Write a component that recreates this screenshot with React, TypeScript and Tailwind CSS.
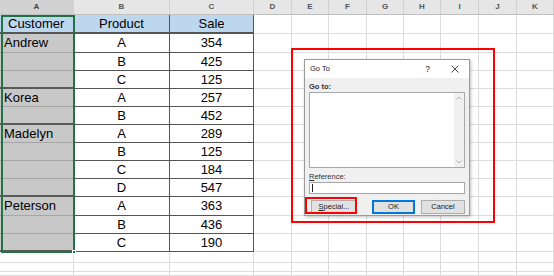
import React from 'react';

// Excel sheet with a "Go To" dialog on top of it

const colWidths = [74, 96, 84, 38, 37, 38, 37, 37, 38, 38, 37];
const colNames = ['A', 'B', 'C', 'D', 'E', 'F', 'G', 'H', 'I', 'J', 'K'];

type Row = { name?: string; product: string; sale: number; groupEnd?: boolean };

const rows: Row[] = [
  { name: 'Andrew', product: 'A', sale: 354 },
  { product: 'B', sale: 425 },
  { product: 'C', sale: 125, groupEnd: true },
  { name: 'Korea', product: 'A', sale: 257 },
  { product: 'B', sale: 452, groupEnd: true },
  { name: 'Madelyn', product: 'A', sale: 289 },
  { product: 'B', sale: 125 },
  { product: 'C', sale: 184 },
  { product: 'D', sale: 547, groupEnd: true },
  { name: 'Peterson', product: 'A', sale: 363 },
  { product: 'B', sale: 436 },
  { product: 'C', sale: 190, groupEnd: true },
];

const rowHeights = [19, 18, 18, 18, 18, 18, 18, 18, 18, 19, 18, 18];
const extraRows = [11, 9, 4];

const EmptyCells: React.FC<{ from: number }> = ({ from }) => (
  <>
    {colWidths.slice(from).map((w, i) => (
      <div
        key={i}
        className="shrink-0 border-r border-b border-[#dcdcdc]"
        style={{ width: w }}
      />
    ))}
  </>
);

const GoToDialog: React.FC = () => (
  <div className="absolute left-[304px] top-[59px] w-[166px] h-[157px] bg-[#f0f0f0] border border-[#9b9b9b] shadow-[1px_1px_3px_rgba(0,0,0,0.25)] flex flex-col font-['Liberation_Sans',sans-serif] text-[7.5px] text-[#1a1a1a]">
    <div className="h-[18px] bg-white flex items-center px-[5px] shrink-0">
      <span className="text-[7.5px]">Go To</span>
      <span className="ml-auto mr-[21px] text-[8.5px]">?</span>
      <svg width="8" height="8" viewBox="0 0 8 8" className="mr-[5px]">
        <path d="M0.5 0.5 L7.5 7.5 M7.5 0.5 L0.5 7.5" stroke="#333" strokeWidth="0.9" />
      </svg>
    </div>
    <div className="flex flex-col px-[4px] pt-[4px]">
      <span className="leading-[9px] font-bold text-[#333]">Go to:</span>
      <div className="mt-[1px] h-[76px] bg-white border border-[#a8a8a8] flex">
        <div className="flex-1" />
        <div className="w-[10px] bg-[#f0f0f0] flex flex-col items-center justify-between py-[3px]">
          <svg width="6" height="4" viewBox="0 0 6 4">
            <path d="M0.5 3.5 L3 1 L5.5 3.5" stroke="#a0a0a0" strokeWidth="0.8" fill="none" />
          </svg>
          <svg width="6" height="4" viewBox="0 0 6 4">
            <path d="M0.5 0.5 L3 3 L5.5 0.5" stroke="#a0a0a0" strokeWidth="0.8" fill="none" />
          </svg>
        </div>
      </div>
      <span className="mt-[4px] leading-[9px] text-[#333]">
        <span className="underline">R</span>eference:
      </span>
      <div className="mt-[1px] h-[12px] bg-white border border-[#a8a8a8] flex items-center pl-[2px]">
        <div className="w-px h-[8px] bg-[#222]" />
      </div>
      <div className="mt-[6px] flex items-center">
        <div className="w-[46px] h-[14px] ml-[2px] bg-[#e1e1e1] border border-[#adadad] flex items-center justify-center">
          <span>
            <span className="underline">S</span>pecial...
          </span>
        </div>
        <div className="ml-auto w-[43px] h-[14px] bg-[#e1e1e1] border-2 border-[#0078d7] flex items-center justify-center">
          OK
        </div>
        <div className="ml-[6px] w-[44px] h-[14px] bg-[#e1e1e1] border border-[#adadad] flex items-center justify-center">
          Cancel
        </div>
      </div>
    </div>
  </div>
);

export default function App() {
  return (
    <div className="relative w-[554px] h-[276px] overflow-hidden bg-white font-['Liberation_Sans',sans-serif] text-[13px] text-black">
      {/* column headers */}
      <div className="flex h-[15px] bg-[#e6e6e6] border-b border-[#bfbfbf]">
        {colNames.map((c, i) => (
          <div
            key={c}
            className={`shrink-0 flex items-center justify-center text-[8px] font-bold border-r border-[#d0d0d0] ${
              i === 0 ? 'bg-[#d2d2d2] text-[#444]' : 'text-[#555]'
            }`}
            style={{ width: colWidths[i] }}
          >
            {c}
          </div>
        ))}
      </div>

      {/* header row */}
      <div className="flex h-[19px]">
        <div className="w-[74px] shrink-0 bg-[#bdd7ee] border-b-2 border-[#555] pl-[8px] flex items-center">
          Customer
        </div>
        <div className="w-[96px] shrink-0 bg-[#bdd7ee] border-b-2 border-r border-[#555] flex items-center justify-center">
          Product
        </div>
        <div className="w-[84px] shrink-0 bg-[#bdd7ee] border-b-2 border-r border-[#555] flex items-center justify-center">
          Sale
        </div>
        <EmptyCells from={3} />
      </div>

      {/* data rows */}
      {rows.map((r, i) => (
        <div key={i} className="flex" style={{ height: rowHeights[i] }}>
          <div
            className={`w-[74px] shrink-0 bg-[#c8c8c8] pl-[4px] flex items-center ${
              r.groupEnd ? 'border-b-2 border-[#5a5a5a]' : 'border-b border-[#a6a6a6]'
            }`}
          >
            {r.name}
          </div>
          <div className="w-[96px] shrink-0 border-b border-r border-[#555] flex items-center justify-center">
            {r.product}
          </div>
          <div className="w-[84px] shrink-0 border-b border-r border-[#555] flex items-center justify-center">
            {r.sale}
          </div>
          <EmptyCells from={3} />
        </div>
      ))}

      {extraRows.map((h, i) => (
        <div key={`x${i}`} className="flex" style={{ height: h }}>
          <EmptyCells from={0} />
        </div>
      ))}

      {/* selection outline on column A */}
      <div className="absolute left-[1px] top-[15px] w-[74px] h-[238px] border-2 border-[#217346]" />
      <div className="absolute left-[72px] top-[250px] w-[4px] h-[4px] bg-[#217346] border border-white" />

      {/* red highlight around dialog */}
      <div className="absolute left-[291px] top-[48px] w-[204px] h-[175px] border-2 border-[#ff0000]" />

      <GoToDialog />

      {/* red highlight around Special button */}
      <div className="absolute left-[305px] top-[197px] w-[52px] h-[17px] border-2 border-[#ff0000]" />
    </div>
  );
}
